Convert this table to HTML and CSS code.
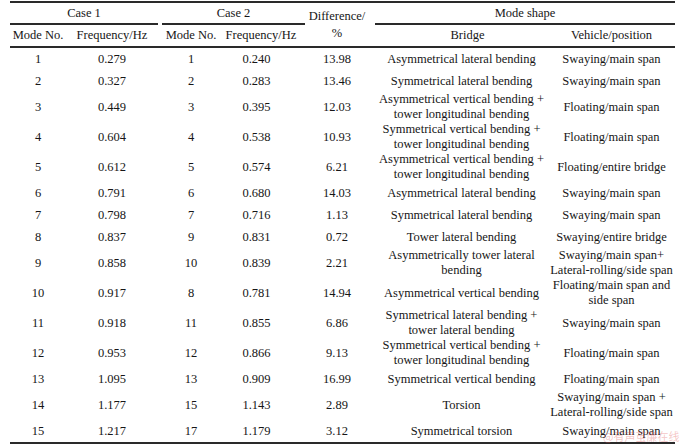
FILE: index.html
```html
<!DOCTYPE html>
<html>
<head>
<meta charset="utf-8">
<link rel="stylesheet" href="styles.css">
</head>
<body>
<table class="modes">
  <colgroup>
    <col class="c1"><col class="c2"><col class="c3"><col class="c4"><col class="c5"><col class="c6"><col class="c7">
  </colgroup>
  <thead>
    <tr class="r1">
      <th colspan="2" class="grp"><div class="uline">Case 1</div></th>
      <th colspan="2" class="grp"><div class="uline gap">Case 2</div></th>
      <th rowspan="2" class="diff">Difference/<br>%</th>
      <th colspan="2" class="grp"><div class="uline">Mode shape</div></th>
    </tr>
    <tr class="r2">
      <th>Mode No.</th>
      <th>Frequency/Hz</th>
      <th class="m2">Mode No.</th>
      <th class="f2h">Frequency/Hz</th>
      <th class="bh">Bridge</th>
      <th class="vh">Vehicle/position</th>
    </tr>
  </thead>
  <tbody>
    <tr><td>1</td><td>0.279</td><td class="m2">1</td><td class="f2">0.240</td><td class="d">13.98</td><td>Asymmetrical lateral bending</td><td>Swaying/main span</td></tr>
    <tr><td>2</td><td>0.327</td><td class="m2">2</td><td class="f2">0.283</td><td class="d">13.46</td><td>Symmetrical lateral bending</td><td>Swaying/main span</td></tr>
    <tr class="two"><td>3</td><td>0.449</td><td class="m2">3</td><td class="f2">0.395</td><td class="d">12.03</td><td>Asymmetrical vertical bending +<br>tower longitudinal bending</td><td>Floating/main span</td></tr>
    <tr class="two"><td>4</td><td>0.604</td><td class="m2">4</td><td class="f2">0.538</td><td class="d">10.93</td><td>Symmetrical vertical bending +<br>tower longitudinal bending</td><td>Floating/main span</td></tr>
    <tr class="two"><td>5</td><td>0.612</td><td class="m2">5</td><td class="f2">0.574</td><td class="d">6.21</td><td>Asymmetrical vertical bending +<br>tower longitudinal bending</td><td>Floating/entire bridge</td></tr>
    <tr><td>6</td><td>0.791</td><td class="m2">6</td><td class="f2">0.680</td><td class="d">14.03</td><td>Asymmetrical lateral bending</td><td>Swaying/main span</td></tr>
    <tr><td>7</td><td>0.798</td><td class="m2">7</td><td class="f2">0.716</td><td class="d">1.13</td><td>Symmetrical lateral bending</td><td>Swaying/main span</td></tr>
    <tr><td>8</td><td>0.837</td><td class="m2">9</td><td class="f2">0.831</td><td class="d">0.72</td><td>Tower lateral bending</td><td>Swaying/entire bridge</td></tr>
    <tr class="two"><td>9</td><td>0.858</td><td class="m2">10</td><td class="f2">0.839</td><td class="d">2.21</td><td>Asymmetrically tower lateral<br>bending</td><td>Swaying/main span+<br>Lateral-rolling/side span</td></tr>
    <tr class="two"><td>10</td><td>0.917</td><td class="m2">8</td><td class="f2">0.781</td><td class="d">14.94</td><td>Asymmetrical vertical bending</td><td>Floating/main span and<br>side span</td></tr>
    <tr class="two"><td>11</td><td>0.918</td><td class="m2">11</td><td class="f2">0.855</td><td class="d">6.86</td><td>Symmetrical lateral bending +<br>tower lateral bending</td><td>Swaying/main span</td></tr>
    <tr class="two"><td>12</td><td>0.953</td><td class="m2">12</td><td class="f2">0.866</td><td class="d">9.13</td><td>Symmetrical vertical bending +<br>tower longitudinal bending</td><td>Floating/main span</td></tr>
    <tr><td>13</td><td>1.095</td><td class="m2">13</td><td class="f2">0.909</td><td class="d">16.99</td><td>Symmetrical vertical bending</td><td>Floating/main span</td></tr>
    <tr class="two"><td>14</td><td>1.177</td><td class="m2">15</td><td class="f2">1.143</td><td class="d">2.89</td><td>Torsion</td><td>Swaying/main span +<br>Lateral-rolling/side span</td></tr>
    <tr><td>15</td><td>1.217</td><td class="m2">17</td><td class="f2">1.179</td><td class="d">3.12</td><td>Symmetrical torsion</td><td>Swaying/main span</td></tr>
  </tbody>
</table>
<div class="watermark">@有声茧廉在线</div>
</body>
</html>
```

FILE: styles.css
```css
html, body {
  margin: 0;
  padding: 0;
  background: #ffffff;
}
body {
  position: relative;
  width: 680px;
  height: 444px;
  overflow: hidden;
  font-family: "Liberation Serif", "Times New Roman", serif;
  font-size: 12.5px;
  color: #161616;
}
.modes {
  margin: 1px 0 0 10px;
  width: 665px;
  table-layout: fixed;
  border-collapse: separate;
  border-spacing: 0;
  border-top: 2px solid #2a2a2a;
  border-bottom: 2px solid #2a2a2a;
}
.c1 { width: 56px; }
.c2 { width: 92px; }
.c3 { width: 64px; }
.c4 { width: 83px; }
.c5 { width: 70px; }
.c6 { width: 173px; }
.c7 { width: 127px; }

th, td {
  padding: 0;
  font-weight: normal;
  text-align: center;
  vertical-align: middle;
  white-space: nowrap;
  line-height: 15px;
}
.r1 th { height: 22px; }
.r1 .grp { vertical-align: bottom; }
.uline {
  padding: 3px 0 2px;
  border-bottom: 2px solid #2a2a2a;
}
.uline.gap { margin-left: 4px; }
.diff {
  line-height: 17px;
  border-bottom: 2px solid #2a2a2a;
  padding-right: 6px;
}
.r2 th {
  height: 21px;
  border-bottom: 2px solid #2a2a2a;
}
.m2 { padding-left: 2px; }
.f2h { padding-right: 5px; }
.f2 { padding-right: 14px; }
.d { padding-right: 6px; }
.bh { padding-left: 12px; }
tbody tr { height: 22px; }
tbody tr.two { height: 30px; }

.watermark {
  position: absolute;
  left: 603px;
  top: 428px;
  font-family: "Noto Sans CJK SC", "Liberation Serif", serif;
  font-size: 11px;
  color: rgba(225, 90, 90, 0.35);
  letter-spacing: 0;
  pointer-events: none;
}
```
